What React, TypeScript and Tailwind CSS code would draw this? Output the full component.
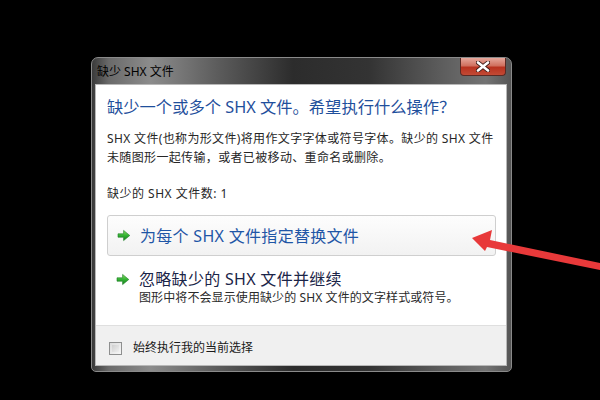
import React from "react";

const font = { fontFamily: '"Noto Sans", "Noto Sans CJK SC", sans-serif' };

function GreenArrow() {
  return (
    <svg width="14" height="13" viewBox="0 0 14 13" className="shrink-0">
      <defs>
        <linearGradient id="ga" x1="0" y1="0" x2="0" y2="1">
          <stop offset="0" stopColor="#86e060" />
          <stop offset="0.5" stopColor="#34b234" />
          <stop offset="1" stopColor="#15801c" />
        </linearGradient>
      </defs>
      <path d="M1 4.8 H6.6 V1.4 L12.8 6.5 L6.6 11.6 V8.2 H1 Z" fill="url(#ga)" stroke="#1a7a22" strokeWidth="0.6" strokeLinejoin="round" />
    </svg>
  );
}

export default function App() {
  return (
    <div className="relative w-[600px] h-[400px] bg-black overflow-hidden" style={font}>
      <div className="pt-[57px] pl-[91px]">
        <div className="w-[421px] h-[315px] flex flex-col rounded-t-[7px] rounded-b-[5px] border border-[#8a8a8a] bg-[linear-gradient(to_right,#3a3a3a_0%,#6a6a6a_4%,#8c8c8c_14%,#5c5c5c_30%,#2c2c2c_48%,#333333_66%,#5e5e5e_84%,#737373_94%,#555555_100%)]">
          <div className="h-[26px] flex items-start shrink-0">
            <span className="pl-[5px] pt-[6px] text-[12px] leading-[16px] text-black">缺少 SHX 文件</span>
            <div className="ml-auto mr-[5px] w-[46px] h-[18px] rounded-b-[4px] border border-[#5a2a24] border-t-0 bg-[linear-gradient(to_bottom,#e6a89c_0%,#d0705f_45%,#b8321f_55%,#c24a35_100%)] flex items-center justify-center">
              <svg width="14" height="11" viewBox="0 0 14 11">
                <path d="M2 1.5 L12 9.5 M12 1.5 L2 9.5" stroke="#3a1a16" strokeWidth="4.2" strokeLinecap="round" />
                <path d="M2 1.5 L12 9.5 M12 1.5 L2 9.5" stroke="#ffffff" strokeWidth="2.6" strokeLinecap="round" />
              </svg>
            </div>
          </div>
          <div className="flex-1 ml-[3px] mr-[4px] mb-[5px] border border-[#b8b8b8] flex flex-col bg-white">
            <div className="flex-1 flex flex-col pl-[11px] pr-[10px]">
              <div className="mt-[10px] text-[16.3px] leading-[24px] text-[#1f4f9c] whitespace-nowrap">
                缺少一个或多个 SHX 文件。希望执行什么操作？
              </div>
              <div className="mt-[10px] text-[12px] leading-[19px] tracking-[0.35px] text-[#262626] whitespace-nowrap">
                SHX 文件(也称为形文件)将用作文字字体或符号字体。缺少的 SHX 文件
                <br />
                未随图形一起传输，或者已被移动、重命名或删除。
              </div>
              <div className="mt-[17px] text-[12px] leading-[19px] tracking-[0.5px] text-[#262626]">缺少的 SHX 文件数: 1</div>
              <div className="mt-[12px] w-[389px] h-[41px] rounded-[3px] border border-[#cfcfcf] bg-[linear-gradient(to_bottom,#fdfdfd,#f2f2f2)] flex items-center pl-[9px] gap-[9px]">
                <GreenArrow />
                <span className="text-[16px] leading-[20px] tracking-[0.3px] text-[#1f56a6] whitespace-nowrap">为每个 SHX 文件指定替换文件</span>
              </div>
              <div className="mt-[13px] flex pl-[9px] gap-[9px]">
                <div className="pt-[4px]">
                  <GreenArrow />
                </div>
                <div className="flex flex-col">
                  <span className="text-[16px] leading-[20px] tracking-[0.3px] text-[#1b2548] whitespace-nowrap">忽略缺少的 SHX 文件并继续</span>
                  <span className="text-[12px] leading-[17px] tracking-[0.1px] text-[#2a2a2a] whitespace-nowrap">图形中将不会显示使用缺少的 SHX 文件的文字样式或符号。</span>
                </div>
              </div>
            </div>
            <div className="h-[40px] shrink-0 bg-[#f0f0f0] border-t border-[#dfdfdf] flex items-center pl-[13px] pt-[5px] gap-[11px]">
              <div className="w-[13px] h-[13px] border border-[#8e8f8f] bg-[linear-gradient(135deg,#dcdcdc,#f6f6f6)] p-[2px]">
                <div className="w-full h-full bg-[linear-gradient(135deg,#cfcfcf,#efefef)]" />
              </div>
              <span className="text-[12px] leading-[16px] text-[#1a1a1a]">始终执行我的当前选择</span>
            </div>
          </div>
        </div>
      </div>
      <svg className="absolute left-0 top-0 pointer-events-none" width="600" height="400" viewBox="0 0 600 400">
        <polygon points="472,238 492,230 490,240 600,263 600,270 487,247 485,251" fill="#e8393a" />
      </svg>
    </div>
  );
}
